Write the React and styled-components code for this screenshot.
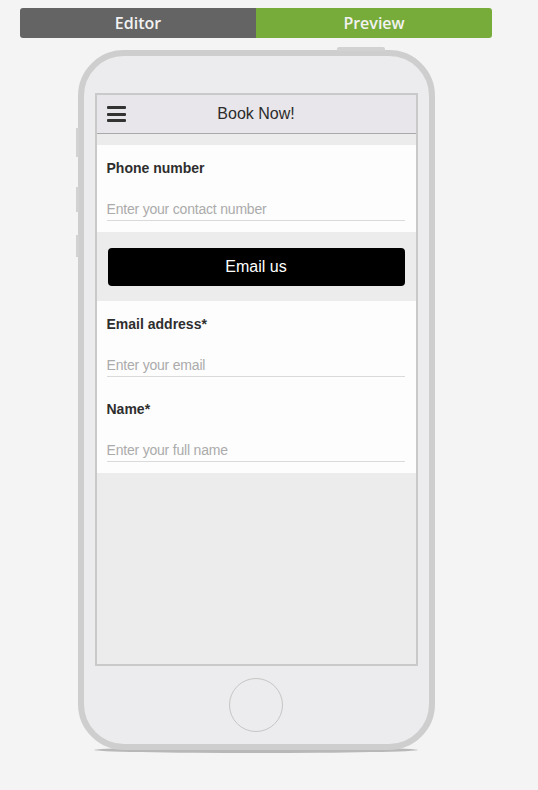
import React from "react";
import styled, { createGlobalStyle } from "styled-components";

const GlobalStyle = createGlobalStyle`
  html, body {
    margin: 0;
    padding: 0;
    background: #f4f4f4;
  }
  * { box-sizing: border-box; }
`;

const Page = styled.div`
  width: 472px;
  margin-left: 20px;
  padding-top: 8px;
`;

const Tabs = styled.div`
  display: flex;
  height: 30px;
  border-radius: 3px;
  overflow: hidden;
`;

const Tab = styled.div`
  flex: 1;
  display: flex;
  align-items: center;
  justify-content: center;
  font-family: "Open Sans", sans-serif;
  font-weight: 600;
  font-size: 16px;
  color: #f2f2f2;
  background: ${(p) => (p.active ? "#78ac3a" : "#646464")};
`;

const Phone = styled.div`
  position: relative;
  width: 357px;
  height: 700px;
  margin: 12px auto 0;
  border: 6px solid #cecece;
  border-radius: 46px;
  background: #ececee;
  padding: 37px 11px 0;
  display: flex;
  flex-direction: column;
`;

const PhoneShadow = styled.div`
  width: 324px;
  height: 6px;
  margin: -3px auto 0;
  border-radius: 50%;
  background: #b8b8b8;
  position: relative;
  z-index: 0;
`;

const PhoneWrap = styled.div`
  display: flex;
  flex-direction: column;

  ${Phone} {
    z-index: 1;
  }
`;

const TopKey = styled.div`
  position: absolute;
  top: -9px;
  left: 253px;
  width: 48px;
  height: 4px;
  background: #d2d2d2;
  border-radius: 2px 2px 0 0;
`;

const SideKey = styled.div`
  position: absolute;
  left: -8px;
  top: ${(p) => p.top}px;
  width: 3px;
  height: ${(p) => p.h}px;
  background: #d2d2d2;
`;

const Screen = styled.div`
  height: 573px;
  border: 2px solid #c9c9c9;
  background: #ececec;
  display: flex;
  flex-direction: column;
  font-family: "Liberation Sans", Arial, sans-serif;
`;

const Header = styled.div`
  height: 39px;
  flex: none;
  background: #e8e6ea;
  border-bottom: 1px solid #a9a9ab;
  position: relative;
  display: flex;
  align-items: center;
  justify-content: center;
  font-size: 16px;
  color: #2c2c2c;
`;

const Burger = styled.div`
  position: absolute;
  left: 10px;
  top: 11px;
  width: 19px;
  height: 16px;
  display: flex;
  flex-direction: column;
  justify-content: space-between;

  span {
    display: block;
    height: 3px;
    background: #333;
    border-radius: 1px;
  }
`;

const Section = styled.div`
  background: ${(p) => (p.grey ? "#ececec" : "#fdfdfd")};
  padding: ${(p) => p.pad};
`;

const Field = styled.div`
  & + & {
    margin-top: 24px;
  }
`;

const Label = styled.div`
  font-weight: bold;
  font-size: 14px;
  color: #2e2e2e;
  line-height: 16px;
`;

const Input = styled.div`
  margin-top: 25px;
  padding-bottom: 3px;
  border-bottom: 1px solid #dadada;
  font-size: 14px;
  line-height: 16px;
  color: #ababab;
  letter-spacing: -0.2px;
`;

const Button = styled.div`
  height: 38px;
  background: #000;
  border-radius: 4px;
  color: #fff;
  font-size: 16px;
  display: flex;
  align-items: center;
  justify-content: center;
`;

const HomeArea = styled.div`
  flex: 1;
  display: flex;
  align-items: center;
  justify-content: center;
`;

const HomeButton = styled.div`
  width: 54px;
  height: 54px;
  border-radius: 50%;
  border: 1px solid #c6c6c6;
`;

export default function App() {
  return (
    <>
      <GlobalStyle />
      <Page>
        <Tabs>
          <Tab>Editor</Tab>
          <Tab active>Preview</Tab>
        </Tabs>
        <PhoneWrap>
          <Phone>
            <TopKey />
            <SideKey top={72} h={29} />
            <SideKey top={131} h={25} />
            <SideKey top={179} h={22} />
            <Screen>
              <Header>
                <Burger>
                  <span />
                  <span />
                  <span />
                </Burger>
                Book Now!
              </Header>
              <Section grey pad="11px 0 0" />
              <Section pad="15px 11px 11px 10px">
                <Field>
                  <Label>Phone number</Label>
                  <Input>Enter your contact number</Input>
                </Field>
              </Section>
              <Section grey pad="16px 11px 15px 11px">
                <Button>Email us</Button>
              </Section>
              <Section pad="15px 11px 11px 10px">
                <Field>
                  <Label>Email address*</Label>
                  <Input>Enter your email</Input>
                </Field>
                <Field>
                  <Label>Name*</Label>
                  <Input>Enter your full name</Input>
                </Field>
              </Section>
            </Screen>
            <HomeArea>
              <HomeButton />
            </HomeArea>
          </Phone>
          <PhoneShadow />
        </PhoneWrap>
      </Page>
    </>
  );
}
